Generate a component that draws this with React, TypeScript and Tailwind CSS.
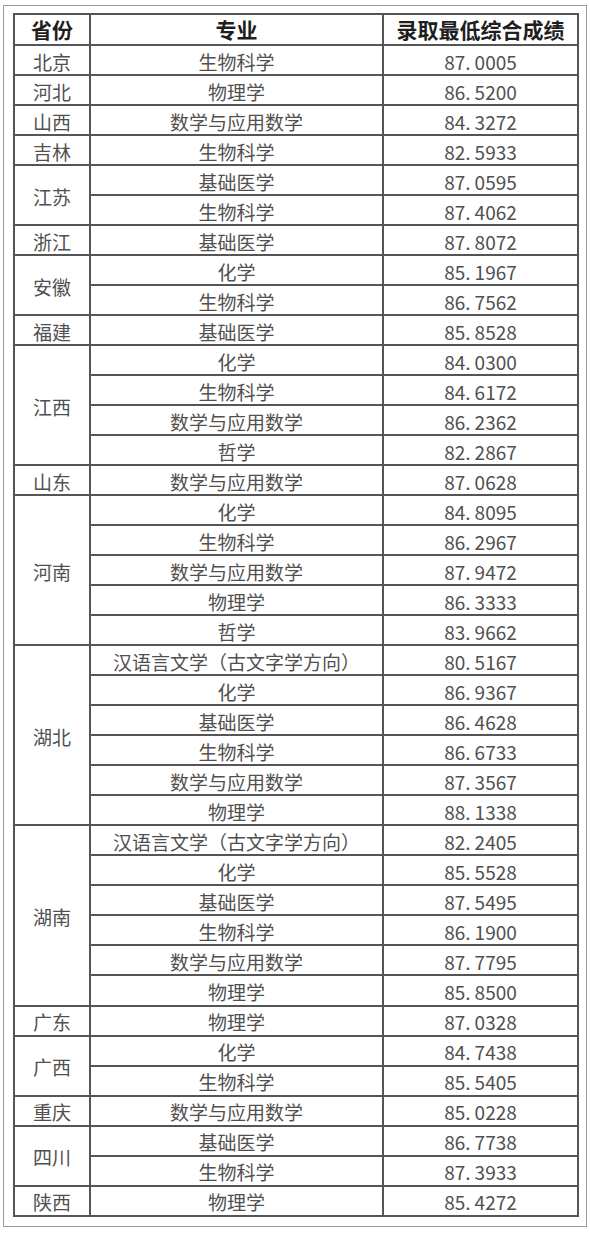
import React from "react";

type Group = { p: string; rows: [string, string][] };

const data: Group[] = [
  { p: "北京", rows: [["生物科学", "87.0005"]] },
  { p: "河北", rows: [["物理学", "86.5200"]] },
  { p: "山西", rows: [["数学与应用数学", "84.3272"]] },
  { p: "吉林", rows: [["生物科学", "82.5933"]] },
  { p: "江苏", rows: [["基础医学", "87.0595"], ["生物科学", "87.4062"]] },
  { p: "浙江", rows: [["基础医学", "87.8072"]] },
  { p: "安徽", rows: [["化学", "85.1967"], ["生物科学", "86.7562"]] },
  { p: "福建", rows: [["基础医学", "85.8528"]] },
  {
    p: "江西",
    rows: [
      ["化学", "84.0300"],
      ["生物科学", "84.6172"],
      ["数学与应用数学", "86.2362"],
      ["哲学", "82.2867"],
    ],
  },
  { p: "山东", rows: [["数学与应用数学", "87.0628"]] },
  {
    p: "河南",
    rows: [
      ["化学", "84.8095"],
      ["生物科学", "86.2967"],
      ["数学与应用数学", "87.9472"],
      ["物理学", "86.3333"],
      ["哲学", "83.9662"],
    ],
  },
  {
    p: "湖北",
    rows: [
      ["汉语言文学（古文字学方向）", "80.5167"],
      ["化学", "86.9367"],
      ["基础医学", "86.4628"],
      ["生物科学", "86.6733"],
      ["数学与应用数学", "87.3567"],
      ["物理学", "88.1338"],
    ],
  },
  {
    p: "湖南",
    rows: [
      ["汉语言文学（古文字学方向）", "82.2405"],
      ["化学", "85.5528"],
      ["基础医学", "87.5495"],
      ["生物科学", "86.1900"],
      ["数学与应用数学", "87.7795"],
      ["物理学", "85.8500"],
    ],
  },
  { p: "广东", rows: [["物理学", "87.0328"]] },
  { p: "广西", rows: [["化学", "84.7438"], ["生物科学", "85.5405"]] },
  { p: "重庆", rows: [["数学与应用数学", "85.0228"]] },
  { p: "四川", rows: [["基础医学", "86.7738"], ["生物科学", "87.3933"]] },
  { p: "陕西", rows: [["物理学", "85.4272"]] },
];

const cell = "border-2 border-[#555] text-center align-middle p-0";

function Score({ v }: { v: string }) {
  const [a, b] = v.split(".");
  return (
    <span>
      {a}
      <span className="mr-[4px]">.</span>
      {b}
    </span>
  );
}

export default function App() {
  return (
    <div className="w-[590px] h-[1242px] bg-white pt-[5px] pl-[3px] font-['Noto_Sans_CJK_SC','Liberation_Sans',sans-serif]">
      <div className="w-[584px] h-[1222px] border border-[#9a9a9a] pt-[7px] pl-[9px]">
        <table className="border-collapse w-[564px] h-[1204px] table-fixed">
          <colgroup>
            <col className="w-[76px]" />
            <col className="w-[293px]" />
            <col className="w-[195px]" />
          </colgroup>
          <thead>
            <tr className="h-[31px]">
              <th className={`${cell} text-[21px] font-bold text-[#1e1e1e] leading-none`}>省份</th>
              <th className={`${cell} text-[21px] font-bold text-[#1e1e1e] leading-none`}>专业</th>
              <th className={`${cell} text-[21px] font-bold text-[#1e1e1e] leading-none`}>录取最低综合成绩</th>
            </tr>
          </thead>
          <tbody>
            {data.map((g) =>
              g.rows.map((r, i) => (
                <tr key={g.p + i} className="h-[30px]">
                  {i === 0 && (
                    <td
                      rowSpan={g.rows.length}
                      className={`${cell} text-[19px] text-[#505050] leading-none pt-[2px]`}
                    >
                      {g.p}
                    </td>
                  )}
                  <td className={`${cell} text-[19px] text-[#505050] leading-none pt-[2px]`}>{r[0]}</td>
                  <td className={`${cell} text-[19px] text-[#505050] leading-none pt-[2px]`}>
                    <Score v={r[1]} />
                  </td>
                </tr>
              ))
            )}
          </tbody>
        </table>
      </div>
    </div>
  );
}
